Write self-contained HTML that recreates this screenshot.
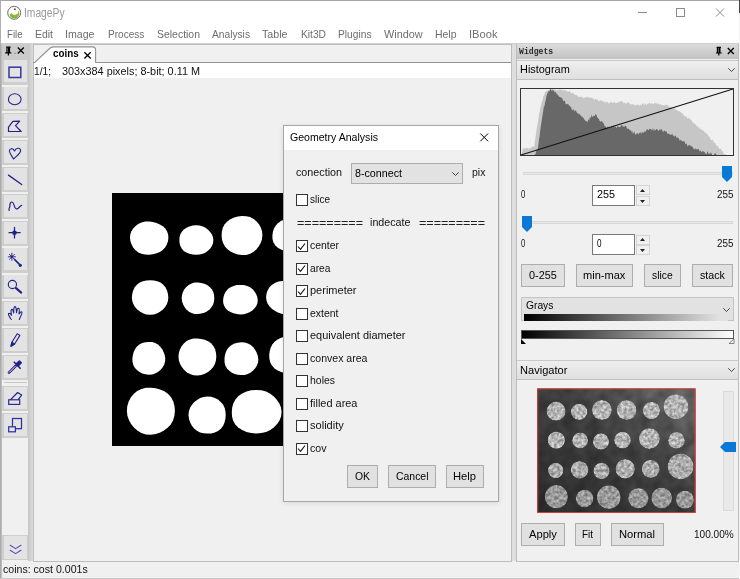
<!DOCTYPE html>
<html><head><meta charset="utf-8"><title>ImagePy</title>
<style>
html,body{margin:0;padding:0;}
body{width:740px;height:579px;position:relative;overflow:hidden;background:#fff;font-family:"Liberation Sans",sans-serif;font-size:11.5px;}
.t{position:absolute;white-space:nowrap;line-height:16px;transform-origin:0 0;}
.btn{position:absolute;box-sizing:border-box;border:1px solid #adadad;background:#e1e1e1;}
.tb{position:absolute;left:3.5px;width:23.5px;height:24px;background:#e4e4e4;}
.cb{position:absolute;box-sizing:border-box;width:12px;height:12px;border:1px solid #333;background:#fff;}
svg{position:absolute;overflow:visible;}
</style></head><body>

<div style="position:absolute;left:0px;top:0px;width:740px;height:1px;background:#a5a5a5;"></div>
<svg style="left:0px;top:0px" width="30" height="26" viewBox="0 0 30 26">
<circle cx="14.2" cy="12.8" r="6.5" fill="#fbfdf6" stroke="#6a6a6a" stroke-width="1"/>
<path d="M9.6 14.2A4.8 4.8 0 0 0 19.2 13.2A4.9 4.9 0 0 0 17.6 9.4A3.4 3.4 0 0 1 11.6 13.2Z" fill="#8ab83a"/>
<path d="M10.4 15.8A4.8 4.8 0 0 0 18.9 14.6A4.6 3.6 0 0 1 10.4 15.8Z" fill="#6f9f2a"/>
<circle cx="14.9" cy="9.2" r="1" fill="#555"/>
</svg>
<div class="t" style="left:23.50px;top:4.84px;font-size:12px;color:#999;transform:scaleX(0.8555);">ImagePy</div>
<svg style="left:0px;top:0px" width="740" height="26" viewBox="0 0 740 26">
<path d="M638 12.5h9" stroke="#8a8a8a" stroke-width="1" fill="none"/>
<rect x="676.5" y="8.5" width="8" height="8" stroke="#8a8a8a" stroke-width="1" fill="none"/>
<path d="M716 8.5l8 8M724 8.5l-8 8" stroke="#8a8a8a" stroke-width="1" fill="none"/>
</svg>
<div class="t" style="left:6.50px;top:25.52px;font-size:11.5px;color:#6d6d6d;transform:scaleX(0.8372);">File</div>
<div class="t" style="left:34.50px;top:25.52px;font-size:11.5px;color:#6d6d6d;transform:scaleX(0.9074);">Edit</div>
<div class="t" style="left:65.00px;top:25.52px;font-size:11.5px;color:#6d6d6d;transform:scaleX(0.9227);">Image</div>
<div class="t" style="left:107.50px;top:25.52px;font-size:11.5px;color:#6d6d6d;transform:scaleX(0.8732);">Process</div>
<div class="t" style="left:156.50px;top:25.52px;font-size:11.5px;color:#6d6d6d;transform:scaleX(0.9087);">Selection</div>
<div class="t" style="left:211.50px;top:25.52px;font-size:11.5px;color:#6d6d6d;transform:scaleX(0.8871);">Analysis</div>
<div class="t" style="left:262.00px;top:25.52px;font-size:11.5px;color:#6d6d6d;transform:scaleX(0.9278);">Table</div>
<div class="t" style="left:300.50px;top:25.52px;font-size:11.5px;color:#6d6d6d;transform:scaleX(0.8891);">Kit3D</div>
<div class="t" style="left:337.50px;top:25.52px;font-size:11.5px;color:#6d6d6d;transform:scaleX(0.8881);">Plugins</div>
<div class="t" style="left:383.75px;top:25.52px;font-size:11.5px;color:#6d6d6d;transform:scaleX(0.9465);">Window</div>
<div class="t" style="left:435.00px;top:25.52px;font-size:11.5px;color:#6d6d6d;transform:scaleX(0.9098);">Help</div>
<div class="t" style="left:469.00px;top:25.52px;font-size:11.5px;color:#6d6d6d;transform:scaleX(0.9681);">IBook</div>
<div style="position:absolute;left:0px;top:42.5px;width:740px;height:537px;background:#f0f0f0;"></div>
<div style="position:absolute;left:0px;top:42.5px;width:740px;height:1.5px;background:#d0d0d0;"></div>
<div style="position:absolute;left:0px;top:1px;width:1px;height:578px;background:#b0b0b0;"></div>
<div style="position:absolute;left:0px;top:43.5px;width:2px;height:535px;background:linear-gradient(to right,#a2a2a2,#c6c6c6);"></div>
<div style="position:absolute;left:2px;top:44px;width:26.2px;height:517px;background:#f0f0f0;"></div>
<div style="position:absolute;left:2px;top:44px;width:26.2px;height:15.7px;background:#cbcbcb;"></div>
<div style="position:absolute;left:28.2px;top:44px;width:4.5px;height:517px;background:linear-gradient(to right,#c6c6c6,#dcdcdc);"></div>
<svg style="left:0px;top:44px" width="30" height="16" viewBox="0 0 30 16">
<path d="M6.2 3.2h4.4M7 3.2v5.6M5.2 8.8h6.2M8.4 8.8v2.8" stroke="#000" stroke-width="1.2" fill="none"/>
<rect x="8" y="3.2" width="2.1" height="5.6" fill="#000"/>
<rect x="14.5" y="8.8" width="1" height="1" fill="#555"/>
<path d="M17.8 3.5l6 6M23.8 3.5l-6 6" stroke="#000" stroke-width="1.3" fill="none"/>
</svg>
<div style="position:absolute;left:2.1px;top:59.7px;width:25.9px;height:24.9px;background:#cecece;"></div>
<div style="position:absolute;left:4.1px;top:60.4px;width:22.5px;height:22.0px;background:#e3e3e3;"></div>
<div style="position:absolute;left:2.1px;top:86.55px;width:25.9px;height:24.9px;background:#cecece;"></div>
<div style="position:absolute;left:4.1px;top:87.25px;width:22.5px;height:22.0px;background:#e3e3e3;"></div>
<div style="position:absolute;left:2.1px;top:113.4px;width:25.9px;height:24.9px;background:#cecece;"></div>
<div style="position:absolute;left:4.1px;top:114.1px;width:22.5px;height:22.0px;background:#e3e3e3;"></div>
<div style="position:absolute;left:2.1px;top:140.25px;width:25.9px;height:24.9px;background:#cecece;"></div>
<div style="position:absolute;left:4.1px;top:140.95px;width:22.5px;height:22.0px;background:#e3e3e3;"></div>
<div style="position:absolute;left:2.1px;top:167.1px;width:25.9px;height:24.9px;background:#cecece;"></div>
<div style="position:absolute;left:4.1px;top:167.8px;width:22.5px;height:22.0px;background:#e3e3e3;"></div>
<div style="position:absolute;left:2.1px;top:193.95px;width:25.9px;height:24.9px;background:#cecece;"></div>
<div style="position:absolute;left:4.1px;top:194.65px;width:22.5px;height:22.0px;background:#e3e3e3;"></div>
<div style="position:absolute;left:2.1px;top:220.8px;width:25.9px;height:24.9px;background:#cecece;"></div>
<div style="position:absolute;left:4.1px;top:221.5px;width:22.5px;height:22.0px;background:#e3e3e3;"></div>
<div style="position:absolute;left:2.1px;top:247.65px;width:25.9px;height:24.9px;background:#cecece;"></div>
<div style="position:absolute;left:4.1px;top:248.35px;width:22.5px;height:22.0px;background:#e3e3e3;"></div>
<div style="position:absolute;left:2.1px;top:274.5px;width:25.9px;height:24.9px;background:#cecece;"></div>
<div style="position:absolute;left:4.1px;top:275.2px;width:22.5px;height:22.0px;background:#e3e3e3;"></div>
<div style="position:absolute;left:2.1px;top:301.35px;width:25.9px;height:24.9px;background:#cecece;"></div>
<div style="position:absolute;left:4.1px;top:302.05px;width:22.5px;height:22.0px;background:#e3e3e3;"></div>
<div style="position:absolute;left:2.1px;top:328.2px;width:25.9px;height:24.9px;background:#cecece;"></div>
<div style="position:absolute;left:4.1px;top:328.9px;width:22.5px;height:22.0px;background:#e3e3e3;"></div>
<div style="position:absolute;left:2.1px;top:355.05px;width:25.9px;height:24.9px;background:#cecece;"></div>
<div style="position:absolute;left:4.1px;top:355.75px;width:22.5px;height:22.0px;background:#e3e3e3;"></div>
<div style="position:absolute;left:2.1px;top:386.1px;width:25.9px;height:24.9px;background:#cecece;"></div>
<div style="position:absolute;left:4.1px;top:386.8px;width:22.5px;height:22.0px;background:#e3e3e3;"></div>
<div style="position:absolute;left:2.1px;top:412.95px;width:25.9px;height:24.9px;background:#cecece;"></div>
<div style="position:absolute;left:4.1px;top:413.65px;width:22.5px;height:22.0px;background:#e3e3e3;"></div>
<div style="position:absolute;left:3.5px;top:381.6px;width:23.5px;height:1px;background:#c8c8c8;"></div>
<div style="position:absolute;left:2.1px;top:534.8px;width:25.9px;height:25.6px;background:#cecece;"></div>
<div style="position:absolute;left:4.1px;top:535.5px;width:22.5px;height:23.2px;background:#e3e3e3;"></div>
<svg style="left:0;top:0" width="32" height="579" viewBox="0 0 32 579" fill="none" stroke="#22228a" stroke-width="1.1" stroke-linejoin="round" stroke-linecap="round"><rect x="9" y="67.2" width="11.8" height="10.3" stroke-width="1.5" stroke="#3636a0" stroke-linejoin="miter"/><ellipse cx="14.75" cy="99.3" rx="6.3" ry="5.5"/><path d="M8.5 127.1L12.9 121.4L19.7 121.2L15.5 125.6L21.2 131.5L8.5 131.5Z" stroke-width="1.2"/><path d="M13.6 159C12 156 9.6 153.5 9.4 151C9.3 148.5 12.6 147.3 14.6 151C15.8 147.8 19.8 147.3 20.6 150C21.2 153 16.5 156.2 13.6 159Z"/><path d="M8.5 175.1L21.7 184.5" stroke-width="1.3"/><path d="M9.2 210.4C8 208.5 10.2 207.6 9.9 206C9.6 203.8 10.8 201.9 12 202C13.8 202.2 13.9 205.6 14.8 207.2C15.8 209 17.2 209.4 18.3 208.2C19.5 207 20.4 205.9 21.7 205.3" stroke-width="1.2"/><path d="M14.5 227.3V237.9M9.1 232.7H20.2" stroke-width="1.3"/><circle cx="14.5" cy="232.7" r="2.3" fill="#22228a" stroke="none"/><path d="M11.9 253.2V260.4M8.3 256.8H15.5M9.4 254.3L14.4 259.3M14.4 254.3L9.4 259.3" stroke-width="0.9"/><circle cx="11.9" cy="256.8" r="1.3" fill="#22228a" stroke="none"/><path d="M14.5 259.4L20.5 265.4" stroke-width="1.5"/><circle cx="20.3" cy="265.3" r="1.6" fill="#22228a" stroke="none"/><circle cx="12.4" cy="284.5" r="4.1"/><path d="M16 288.1L21.2 292.6" stroke-width="2.1"/><path d="M11.3 319.5C10 317.5 8 315 8.5 313.6C9.2 312.6 10.6 313.8 11.5 315.2C11.3 313 10.3 310 11.6 309.4C12.8 309 13.3 311.3 13.7 313C13.7 310.8 13.4 307 14.9 306.6C16.3 306.4 16.3 310 16.5 312.6C17 310.6 17.2 308 18.6 308.3C19.9 308.8 19.2 311.8 19 314C19.7 312.8 20.8 311.4 21.8 312C22.8 313 20.3 316.5 19.3 319.5" stroke-width="1.1"/><path d="M11 346.2L11.9 342.2L17.2 333.8L19.9 335.4L14.6 344L11 346.2Z" stroke-width="1.1"/><path d="M11 346.2L11.9 342.2L14.6 344Z" fill="#22228a"/><path d="M9 372.6L15.6 366" stroke-width="2.6"/><path d="M9.3 372.3L15.3 366.3" stroke="#f4f4f4" stroke-width="0.9"/><path d="M14.3 362.2L20.2 368.2M16 364.2L19.4 361L21.2 362.8L18 366.2Z" fill="#22228a" stroke-width="1.6"/><rect x="8.7" y="399.8" width="11" height="4.6" stroke-width="1.2" stroke="#2a2a98" stroke-linejoin="miter"/><path d="M10.9 399.4L17.6 392.5L21.6 395.1L18.4 399.4" stroke-width="1.2"/><rect x="12.5" y="418.5" width="9" height="10.2" stroke-width="1.25" stroke="#3030a0" stroke-linejoin="miter"/><rect x="8.7" y="426.8" width="6.7" height="5" fill="#e4e4e4" stroke-width="1.25" stroke="#3030a0" stroke-linejoin="miter"/><path d="M10.2 545.3L15.6 548.6L21 545.3M10.2 550.3L15.6 553.6L21 550.3" stroke="#5050b4" stroke-width="1.1"/></svg>
<div style="position:absolute;left:32.5px;top:44px;width:479.5px;height:517.5px;background:#f0f0f0;border:1px solid #bdbdbd;box-sizing:border-box;"></div>
<svg style="left:33px;top:45px" width="480" height="19" viewBox="0 0 480 19">
<path d="M1.5 18L16 4Q18.2 1.9 20.5 1.9H59.5Q62.6 1.9 62.6 5V18Z" fill="#fff"/>
<path d="M0 17.6H1.5L16 4Q18.2 1.9 20.5 1.9H59.5Q62.6 1.9 62.6 5V17.6H478" fill="none" stroke="#939393" stroke-width="1.1"/>
<path d="M51.4 7.2l6.3 6.3M57.7 7.2l-6.3 6.3" stroke="#000" stroke-width="1.3" fill="none"/>
</svg>
<div class="t" style="left:53.10px;top:45.32px;font-size:11.5px;color:#000;transform:scaleX(0.8562);font-weight:bold;">coins</div>
<div style="position:absolute;left:33.5px;top:63px;width:477.5px;height:14.5px;background:#fff;"></div>
<div class="t" style="left:34.30px;top:62.52px;font-size:11.5px;color:#111;transform:scaleX(0.8852);">1/1;</div>
<div class="t" style="left:61.80px;top:62.52px;font-size:11.5px;color:#111;transform:scaleX(0.9441);">303x384 pixels; 8-bit; 0.11 M</div>
<div style="position:absolute;left:112px;top:193px;width:200px;height:252.8px;background:#000;"></div>
<svg style="left:0;top:0" width="740" height="579" viewBox="0 0 740 579"><polygon points="168.4,238.1 167.9,241.5 166.8,244.6 165.1,247.5 162.8,249.9 159.9,251.9 156.6,253.3 153.0,254.2 149.1,254.7 145.1,254.5 141.4,253.7 138.1,252.2 135.3,250.0 133.2,247.4 131.6,244.5 130.5,241.5 130.0,238.1 130.2,234.7 131.3,231.5 133.0,228.7 135.4,226.2 138.2,224.1 141.5,222.6 145.1,221.6 149.1,221.5 153.0,222.0 156.5,223.0 159.8,224.4 162.8,226.3 165.3,228.6 167.1,231.5 168.2,234.7" fill="#fff"/><polygon points="213.4,240.1 213.0,243.2 211.9,246.0 210.3,248.4 208.2,250.6 205.7,252.4 202.8,253.8 199.6,254.6 196.1,254.8 192.6,254.5 189.4,253.8 186.4,252.6 183.7,250.9 181.7,248.6 180.3,246.0 179.6,243.1 179.4,240.1 179.6,237.1 180.4,234.3 181.8,231.7 183.9,229.5 186.5,227.7 189.4,226.4 192.6,225.5 196.1,225.2 199.6,225.5 202.8,226.4 205.6,227.8 208.0,229.7 210.1,231.9 211.8,234.3 212.9,237.0" fill="#fff"/><polygon points="262.4,235.4 261.9,239.4 260.7,243.0 258.8,246.3 256.5,249.2 253.6,251.8 250.2,253.8 246.2,254.9 242.0,255.0 237.8,254.5 234.1,253.3 230.6,251.5 227.5,249.3 225.0,246.4 223.1,243.1 222.0,239.4 221.6,235.4 221.9,231.4 222.9,227.6 224.7,224.2 227.3,221.4 230.5,219.2 234.1,217.6 237.9,216.6 242.0,216.0 246.2,216.2 250.1,217.1 253.7,218.9 256.6,221.4 259.1,224.4 260.9,227.7 262.1,231.4" fill="#fff"/><polygon points="313.0,235.4 312.7,238.9 311.5,242.2 309.5,245.0 306.9,247.5 303.9,249.5 300.5,251.1 296.7,252.1 292.5,252.3 288.4,252.0 284.6,251.0 281.0,249.6 277.8,247.7 275.2,245.2 273.4,242.2 272.5,238.9 272.4,235.4 272.9,232.0 273.9,228.8 275.6,225.8 277.9,223.2 280.9,221.1 284.5,219.6 288.3,218.7 292.5,218.3 296.7,218.6 300.6,219.5 304.0,221.2 306.9,223.4 309.2,225.9 311.0,228.8 312.4,231.9" fill="#fff"/><polygon points="168.3,297.2 168.0,300.7 166.9,304.0 165.2,306.9 162.9,309.4 160.3,311.5 157.3,313.3 153.9,314.4 150.1,314.8 146.3,314.4 142.9,313.2 139.9,311.5 137.3,309.4 135.0,306.9 133.3,304.0 132.2,300.7 131.9,297.2 132.3,293.7 133.2,290.4 134.7,287.3 136.9,284.7 139.7,282.6 142.9,281.2 146.4,280.5 150.1,280.2 153.8,280.4 157.3,281.2 160.5,282.6 163.3,284.7 165.4,287.3 167.0,290.4 167.9,293.7" fill="#fff"/><polygon points="214.3,298.2 214.0,301.4 213.1,304.4 211.6,307.1 209.6,309.5 207.1,311.3 204.3,312.7 201.3,313.6 198.0,314.1 194.6,313.9 191.5,313.1 188.7,311.6 186.4,309.5 184.5,307.0 183.1,304.3 182.1,301.4 181.7,298.2 182.0,295.0 182.9,292.0 184.4,289.3 186.3,286.9 188.7,284.9 191.5,283.4 194.6,282.6 198.0,282.5 201.3,282.9 204.3,283.8 207.1,285.1 209.7,286.9 211.8,289.2 213.3,291.9 214.1,294.9" fill="#fff"/><polygon points="257.7,299.7 257.5,302.8 256.5,305.6 254.8,308.1 252.6,310.2 250.0,312.0 247.1,313.3 243.8,314.2 240.3,314.5 236.8,314.1 233.5,313.3 230.5,312.1 227.8,310.4 225.6,308.2 224.0,305.6 223.2,302.7 223.1,299.7 223.6,296.7 224.5,294.0 225.9,291.4 227.9,289.1 230.5,287.2 233.5,285.9 236.7,285.1 240.3,284.9 243.9,285.1 247.2,285.9 250.1,287.3 252.6,289.2 254.5,291.5 256.1,294.0 257.2,296.7" fill="#fff"/><polygon points="306.9,297.2 306.5,300.6 305.4,303.8 303.4,306.6 300.9,309.1 297.9,311.1 294.5,312.7 290.7,313.9 286.5,314.3 282.3,313.9 278.4,312.8 275.1,311.1 272.1,309.0 269.6,306.6 267.7,303.8 266.5,300.6 266.1,297.2 266.5,293.8 267.6,290.6 269.3,287.6 271.7,285.1 274.8,283.0 278.5,281.6 282.4,280.9 286.5,280.7 290.6,281.0 294.5,281.7 298.1,283.0 301.3,285.0 303.7,287.6 305.4,290.6 306.5,293.8" fill="#fff"/><polygon points="165.2,358.3 165.0,361.7 164.1,364.9 162.5,367.6 160.4,370.0 157.9,371.9 155.1,373.4 152.1,374.4 148.7,374.7 145.4,374.3 142.3,373.4 139.5,372.0 136.9,370.1 134.8,367.7 133.3,364.9 132.5,361.7 132.4,358.3 132.9,355.0 133.7,351.9 135.1,349.1 137.0,346.6 139.4,344.5 142.2,343.0 145.3,342.2 148.7,341.9 152.1,342.1 155.2,343.0 158.0,344.5 160.3,346.7 162.2,349.2 163.6,351.9 164.7,355.0" fill="#fff"/><polygon points="216.3,356.7 215.9,360.5 214.9,364.0 213.2,367.1 210.8,369.8 208.0,372.0 204.8,373.7 201.3,374.9 197.4,375.4 193.5,375.2 189.9,374.1 186.7,372.2 184.0,369.8 181.8,367.0 180.1,363.9 178.9,360.5 178.5,356.7 178.8,352.9 179.9,349.4 181.6,346.2 183.8,343.4 186.6,341.1 189.9,339.4 193.5,338.6 197.4,338.4 201.2,338.9 204.7,339.8 208.1,341.2 211.0,343.3 213.4,346.1 215.1,349.3 216.0,352.9" fill="#fff"/><polygon points="258.3,358.8 258.1,362.2 257.0,365.3 255.4,368.1 253.2,370.5 250.7,372.4 247.8,373.9 244.7,374.9 241.2,375.1 237.8,374.8 234.6,373.9 231.6,372.5 229.0,370.6 226.8,368.2 225.3,365.4 224.6,362.2 224.5,358.8 224.9,355.5 225.7,352.4 227.1,349.6 229.1,347.0 231.6,345.0 234.5,343.6 237.7,342.7 241.2,342.3 244.7,342.6 247.9,343.5 250.8,345.1 253.2,347.2 255.1,349.7 256.6,352.4 257.7,355.4" fill="#fff"/><polygon points="309.2,355.0 308.9,358.9 307.7,362.4 305.7,365.5 303.2,368.1 300.2,370.4 296.9,372.1 293.1,373.1 289.0,373.4 284.9,373.0 281.2,372.0 277.7,370.5 274.5,368.4 272.0,365.6 270.3,362.4 269.4,358.8 269.2,355.0 269.7,351.3 270.7,347.8 272.3,344.6 274.6,341.7 277.6,339.4 281.1,337.8 284.9,336.8 289.0,336.4 293.1,336.7 296.9,337.8 300.3,339.6 303.1,341.9 305.4,344.7 307.3,347.8 308.6,351.2" fill="#fff"/><polygon points="174.9,410.9 174.4,415.7 173.1,420.2 170.9,424.2 167.9,427.6 164.3,430.3 160.3,432.4 155.8,433.9 150.9,434.7 145.9,434.4 141.3,433.0 137.3,430.6 133.9,427.5 131.1,424.0 128.9,420.1 127.4,415.7 126.9,410.9 127.3,406.1 128.7,401.6 130.8,397.6 133.6,394.0 137.2,391.0 141.4,388.9 146.0,387.8 150.9,387.7 155.7,388.2 160.2,389.4 164.4,391.3 168.2,394.0 171.2,397.4 173.3,401.6 174.5,406.1" fill="#fff"/><polygon points="225.7,415.2 225.4,419.0 224.5,422.5 223.1,425.8 220.9,428.7 218.1,431.0 214.8,432.5 211.2,433.4 207.4,433.6 203.6,433.3 200.1,432.4 196.9,430.7 194.1,428.5 191.9,425.7 190.2,422.5 189.0,419.0 188.5,415.2 188.9,411.3 190.1,407.8 192.0,404.8 194.3,402.1 197.1,399.9 200.1,398.1 203.6,396.9 207.4,396.4 211.2,396.8 214.8,397.9 217.9,399.6 220.7,401.9 223.0,404.6 224.7,407.9 225.5,411.4" fill="#fff"/><polygon points="281.6,411.8 281.1,416.3 279.5,420.4 277.1,424.1 274.0,427.3 270.3,429.9 266.1,431.9 261.4,433.1 256.3,433.5 251.2,433.0 246.5,431.9 242.1,430.1 238.2,427.6 235.1,424.3 233.1,420.5 232.0,416.2 231.8,411.8 232.2,407.4 233.4,403.3 235.4,399.5 238.4,396.1 242.2,393.5 246.5,391.6 251.2,390.3 256.3,389.9 261.4,390.2 266.1,391.5 270.3,393.7 273.8,396.5 276.8,399.7 279.2,403.3 280.9,407.3" fill="#fff"/></svg>
<div style="position:absolute;left:283px;top:124.5px;width:215.5px;height:377px;background:#f0f0f0;border:1px solid #a6a6a6;box-sizing:border-box;box-shadow:0 1px 5px rgba(0,0,0,0.10);"></div>
<div style="position:absolute;left:284px;top:125.5px;width:213.5px;height:24.6px;background:#fff;"></div>
<div class="t" style="left:290.00px;top:129.02px;font-size:11.5px;color:#000;transform:scaleX(0.9181);">Geometry Analysis</div>
<svg style="left:480px;top:133px" width="9" height="9" viewBox="0 0 9 9"><path d="M0.3 0.5l7.8 7.8M8.1 0.5l-7.8 7.8" stroke="#000" stroke-width="1" fill="none"/></svg>
<div class="t" style="left:296.00px;top:164.02px;font-size:11.5px;color:#111;transform:scaleX(0.9346);">conection</div>
<div style="position:absolute;left:351px;top:163px;width:112px;height:20.5px;background:#e2e2e2;border:1px solid #adadad;box-sizing:border-box;"></div>
<div class="t" style="left:354.50px;top:165.02px;font-size:11.5px;color:#000;transform:scaleX(0.9310);">8-connect</div>
<svg style="left:452px;top:172px" width="7" height="4" viewBox="0 0 7 4"><path d="M0.3 0.3l3.2 3.2l3.2-3.2" stroke="#444" stroke-width="1" fill="none"/></svg>
<div class="t" style="left:471.80px;top:164.02px;font-size:11.5px;color:#111;transform:scaleX(0.9103);">pix</div>
<div class="cb" style="left:295.5px;top:193.7px"></div>
<div class="t" style="left:309.50px;top:190.52px;font-size:11.5px;color:#111;transform:scaleX(0.8696);">slice</div>
<div class="cb" style="left:295.5px;top:240.2px"><svg style="left:0.5px;top:0.5px" width="9" height="9" viewBox="0 0 9 9"><path d="M1 4.5l2.5 2.8L8 1.5" stroke="#111" stroke-width="1.1" fill="none"/></svg></div>
<div class="t" style="left:309.50px;top:237.02px;font-size:11.5px;color:#111;transform:scaleX(0.9071);">center</div>
<div class="cb" style="left:295.5px;top:262.7px"><svg style="left:0.5px;top:0.5px" width="9" height="9" viewBox="0 0 9 9"><path d="M1 4.5l2.5 2.8L8 1.5" stroke="#111" stroke-width="1.1" fill="none"/></svg></div>
<div class="t" style="left:309.50px;top:259.52px;font-size:11.5px;color:#111;transform:scaleX(0.8891);">area</div>
<div class="cb" style="left:295.5px;top:285.2px"><svg style="left:0.5px;top:0.5px" width="9" height="9" viewBox="0 0 9 9"><path d="M1 4.5l2.5 2.8L8 1.5" stroke="#111" stroke-width="1.1" fill="none"/></svg></div>
<div class="t" style="left:309.50px;top:282.02px;font-size:11.5px;color:#111;transform:scaleX(0.9570);">perimeter</div>
<div class="cb" style="left:295.5px;top:307.7px"></div>
<div class="t" style="left:309.50px;top:304.52px;font-size:11.5px;color:#111;transform:scaleX(0.9095);">extent</div>
<div class="cb" style="left:295.5px;top:330.2px"></div>
<div class="t" style="left:309.50px;top:327.02px;font-size:11.5px;color:#111;transform:scaleX(0.9512);">equivalent diameter</div>
<div class="cb" style="left:295.5px;top:352.7px"></div>
<div class="t" style="left:309.50px;top:349.52px;font-size:11.5px;color:#111;transform:scaleX(0.9174);">convex area</div>
<div class="cb" style="left:295.5px;top:375.2px"></div>
<div class="t" style="left:309.50px;top:372.02px;font-size:11.5px;color:#111;transform:scaleX(0.9096);">holes</div>
<div class="cb" style="left:295.5px;top:397.7px"></div>
<div class="t" style="left:309.50px;top:394.52px;font-size:11.5px;color:#111;transform:scaleX(0.9517);">filled area</div>
<div class="cb" style="left:295.5px;top:420.2px"></div>
<div class="t" style="left:309.50px;top:417.02px;font-size:11.5px;color:#111;transform:scaleX(0.9621);">solidity</div>
<div class="cb" style="left:295.5px;top:442.7px"><svg style="left:0.5px;top:0.5px" width="9" height="9" viewBox="0 0 9 9"><path d="M1 4.5l2.5 2.8L8 1.5" stroke="#111" stroke-width="1.1" fill="none"/></svg></div>
<div class="t" style="left:309.50px;top:439.52px;font-size:11.5px;color:#111;transform:scaleX(0.9227);">cov</div>
<div class="t" style="left:296.50px;top:214.52px;font-size:11.5px;color:#222;transform:scaleX(1.0921);">=========</div>
<div class="t" style="left:370.00px;top:213.52px;font-size:11.5px;color:#111;transform:scaleX(0.9317);">indecate</div>
<div class="t" style="left:418.50px;top:214.52px;font-size:11.5px;color:#222;transform:scaleX(1.0921);">=========</div>
<div class="btn" style="left:347px;top:464.5px;width:31.399999999999977px;height:23px;"></div>
<div class="t" style="left:355.00px;top:467.62px;font-size:11.5px;color:#000;transform:scaleX(0.9027);">OK</div>
<div class="btn" style="left:388px;top:464.5px;width:48px;height:23px;"></div>
<div class="t" style="left:395.50px;top:467.62px;font-size:11.5px;color:#000;transform:scaleX(0.9073);">Cancel</div>
<div class="btn" style="left:446px;top:464.5px;width:38.39999999999998px;height:23px;"></div>
<div class="t" style="left:453.30px;top:467.62px;font-size:11.5px;color:#000;transform:scaleX(0.9732);">Help</div>
<div style="position:absolute;left:512px;top:44px;width:3.5px;height:517px;background:#dedede;"></div>
<div style="position:absolute;left:515.5px;top:43.5px;width:223px;height:518px;background:#f0f0f0;border:1px solid #bdbdbd;box-sizing:border-box;"></div>
<div style="position:absolute;left:516.5px;top:44px;width:221.5px;height:15px;background:linear-gradient(#dcdcdc,#c2c2c2);"></div>
<div class="t" style="left:519.00px;top:43.80px;font-size:9px;color:#2a2a2a;transform:scaleX(0.9048);font-family:'Liberation Mono',monospace;font-weight:bold;">Widgets</div>
<svg style="left:713px;top:44px" width="24" height="16" viewBox="0 0 24 16">
<path d="M3.6 3.4h4.4M4.4 3.4v5.6M2.9 9h5.8M5.8 9v2.6" stroke="#000" stroke-width="1.2" fill="none"/>
<rect x="5.4" y="3.4" width="2.1" height="5.6" fill="#000"/>
<path d="M14.8 4l6 6M20.8 4l-6 6" stroke="#000" stroke-width="1.3" fill="none"/>
</svg>
<div style="position:absolute;left:516.5px;top:59.7px;width:221.5px;height:20px;background:linear-gradient(#efefef,#dfdfdf);border-top:1px solid #c8c8c8;border-bottom:1px solid #c0c0c0;box-sizing:border-box;"></div>
<div class="t" style="left:520.10px;top:61.42px;font-size:11.5px;color:#000;transform:scaleX(0.9488);">Histogram</div>
<svg style="left:727.5px;top:67.9px" width="7" height="4" viewBox="0 0 7 4"><path d="M0.3 0.3l3.2 3.2l3.2-3.2" stroke="#444" stroke-width="1" fill="none"/></svg>
<svg style="left:0;top:0" width="740" height="579" viewBox="0 0 740 579"><rect x="520.5" y="88.5" width="213" height="67" fill="#f0f0f0" stroke="#333" stroke-width="1"/><path d="M521.4 155.5L521.4 154.4L522.1 151.7L522.7 148.9L523.3 148.2L523.9 148.0L524.5 149.3L525.1 147.4L525.7 149.2L526.3 148.1L526.9 147.9L527.5 148.0L528.1 148.5L528.7 149.3L529.3 147.8L529.9 148.4L530.5 148.3L531.1 147.6L531.7 147.7L532.3 146.5L532.9 146.3L533.6 146.4L534.2 147.2L534.8 142.3L535.4 137.8L536.0 134.0L536.6 129.5L537.2 125.2L537.8 122.7L538.4 119.0L539.0 114.5L539.6 111.7L540.2 108.0L540.8 106.1L541.4 103.8L542.0 101.0L542.6 100.6L543.2 96.8L543.8 95.6L544.5 94.4L545.1 91.9L545.7 92.0L546.3 90.5L546.9 91.3L547.5 91.0L548.1 90.0L548.7 90.4L549.3 89.2L549.9 90.0L550.5 89.8L551.1 89.7L551.7 89.5L552.3 90.3L552.9 90.5L553.5 89.5L554.1 89.9L554.7 88.6L555.3 90.0L556.0 89.9L556.6 90.7L557.2 90.5L557.8 89.4L558.4 89.7L559.0 90.3L559.6 89.0L560.2 90.0L560.8 89.5L561.4 89.4L562.0 89.4L562.6 90.9L563.2 89.7L563.8 90.0L564.4 90.3L565.0 91.4L565.6 89.8L566.2 90.7L566.8 90.9L567.5 91.7L568.1 91.7L568.7 91.8L569.3 90.8L569.9 91.5L570.5 91.7L571.1 93.2L571.7 93.8L572.3 92.5L572.9 92.9L573.5 93.4L574.1 93.8L574.7 94.7L575.3 95.3L575.9 95.0L576.5 94.9L577.1 95.9L577.7 95.9L578.3 96.4L579.0 97.3L579.6 96.9L580.2 96.6L580.8 96.9L581.4 97.2L582.0 96.0L582.6 97.9L583.2 97.7L583.8 98.0L584.4 98.0L585.0 97.2L585.6 97.3L586.2 96.8L586.8 98.1L587.4 97.0L588.0 97.1L588.6 97.5L589.2 97.5L589.8 98.0L590.5 97.5L591.1 97.5L591.7 97.9L592.3 98.0L592.9 98.7L593.5 98.1L594.1 100.1L594.7 99.7L595.3 98.8L595.9 99.2L596.5 99.6L597.1 99.8L597.7 99.4L598.3 101.1L598.9 101.6L599.5 100.6L600.1 100.8L600.7 100.1L601.4 100.3L602.0 101.0L602.6 101.0L603.2 102.3L603.8 101.1L604.4 100.9L605.0 103.1L605.6 102.3L606.2 101.7L606.8 102.7L607.4 101.6L608.0 102.6L608.6 103.5L609.2 103.3L609.8 102.9L610.4 101.9L611.0 102.1L611.6 101.7L612.2 102.9L612.9 102.4L613.5 102.9L614.1 101.9L614.7 101.7L615.3 102.9L615.9 103.2L616.5 102.9L617.1 102.8L617.7 102.8L618.3 102.6L618.9 101.5L619.5 102.1L620.1 101.7L620.7 101.0L621.3 101.0L621.9 101.5L622.5 101.6L623.1 102.6L623.7 103.3L624.4 102.3L625.0 103.5L625.6 103.7L626.2 103.8L626.8 102.7L627.4 102.5L628.0 102.6L628.6 102.7L629.2 102.8L629.8 103.8L630.4 104.5L631.0 104.5L631.6 103.9L632.2 104.4L632.8 104.8L633.4 103.4L634.0 104.7L634.6 105.4L635.2 105.2L635.9 105.3L636.5 104.8L637.1 104.3L637.7 105.5L638.3 104.5L638.9 105.4L639.5 105.7L640.1 104.4L640.7 104.4L641.3 105.4L641.9 104.9L642.5 103.6L643.1 103.5L643.7 103.5L644.3 105.0L644.9 104.7L645.5 103.2L646.1 104.6L646.8 104.9L647.4 104.1L648.0 103.4L648.6 103.7L649.2 102.8L649.8 102.4L650.4 104.4L651.0 103.6L651.6 103.3L652.2 104.1L652.8 103.1L653.4 104.2L654.0 104.2L654.6 103.0L655.2 103.1L655.8 103.3L656.4 103.3L657.0 104.1L657.6 103.5L658.3 104.0L658.9 103.5L659.5 105.2L660.1 104.1L660.7 104.5L661.3 104.8L661.9 105.6L662.5 104.7L663.1 105.8L663.7 105.0L664.3 105.2L664.9 105.3L665.5 104.3L666.1 105.3L666.7 104.8L667.3 104.6L667.9 106.5L668.5 105.5L669.1 106.4L669.8 107.2L670.4 107.1L671.0 106.9L671.6 107.6L672.2 107.9L672.8 108.7L673.4 107.5L674.0 108.7L674.6 108.3L675.2 108.7L675.8 110.0L676.4 109.7L677.0 110.1L677.6 110.8L678.2 111.4L678.8 110.7L679.4 111.3L680.0 111.6L680.6 112.0L681.3 112.9L681.9 112.9L682.5 113.5L683.1 113.9L683.7 115.4L684.3 115.4L684.9 116.2L685.5 116.8L686.1 115.9L686.7 117.0L687.3 118.3L687.9 118.6L688.5 117.6L689.1 118.0L689.7 119.2L690.3 119.0L690.9 119.9L691.5 120.0L692.2 121.8L692.8 122.6L693.4 123.4L694.0 122.3L694.6 124.0L695.2 124.4L695.8 123.9L696.4 126.0L697.0 126.7L697.6 125.6L698.2 127.7L698.8 127.0L699.4 127.7L700.0 129.3L700.6 129.5L701.2 128.6L701.8 129.7L702.4 130.4L703.0 130.6L703.7 130.8L704.3 131.6L704.9 133.0L705.5 132.0L706.1 133.6L706.7 133.9L707.3 133.7L707.9 135.1L708.5 136.4L709.1 136.8L709.7 136.6L710.3 139.2L710.9 139.5L711.5 140.5L712.1 139.4L712.7 140.4L713.3 140.6L713.9 142.9L714.5 142.5L715.2 142.9L715.8 144.2L716.4 145.9L717.0 146.3L717.6 145.8L718.2 146.2L718.8 148.5L719.4 148.4L720.0 149.3L720.6 148.6L721.2 149.2L721.8 151.2L722.4 151.3L723.0 151.2L723.6 153.7L724.2 153.7L724.8 154.7L725.4 153.5L726.0 154.9L726.0 155.5Z" fill="#c6c6c6" stroke="none"/><path d="M534.8 155.5L534.8 153.6L535.4 154.6L536.0 151.9L536.6 150.2L537.2 149.4L537.8 149.1L538.4 144.2L539.0 139.4L539.6 136.2L540.2 131.0L540.8 126.2L541.4 122.4L542.0 118.2L542.6 114.7L543.2 111.1L543.8 107.1L544.5 106.0L545.1 102.1L545.7 100.3L546.3 96.8L546.9 94.9L547.5 92.8L548.1 92.4L548.7 90.5L549.3 91.6L549.9 90.0L550.5 88.4L551.1 89.5L551.7 91.1L552.3 88.8L552.9 91.1L553.5 90.2L554.1 90.8L554.7 92.4L555.3 91.7L556.0 92.6L556.6 93.8L557.2 95.3L557.8 93.9L558.4 96.1L559.0 96.4L559.6 96.9L560.2 97.0L560.8 97.5L561.4 97.4L562.0 98.3L562.6 98.9L563.2 101.4L563.8 100.5L564.4 100.7L565.0 101.0L565.6 103.8L566.2 104.4L566.8 104.3L567.5 103.7L568.1 104.1L568.7 104.9L569.3 105.9L569.9 105.6L570.5 107.0L571.1 107.0L571.7 109.6L572.3 110.2L572.9 109.4L573.5 109.0L574.1 111.7L574.7 110.2L575.3 110.8L575.9 110.3L576.5 111.9L577.1 112.8L577.7 113.5L578.3 113.2L579.0 114.7L579.6 113.8L580.2 115.2L580.8 115.3L581.4 116.8L582.0 116.3L582.6 116.9L583.2 118.1L583.8 118.3L584.4 119.7L585.0 119.9L585.6 121.0L586.2 121.1L586.8 121.6L587.4 122.5L588.0 120.2L588.6 119.3L589.2 120.5L589.8 117.2L590.5 118.1L591.1 117.1L591.7 114.5L592.3 116.8L592.9 116.8L593.5 115.8L594.1 116.0L594.7 116.0L595.3 113.8L595.9 114.8L596.5 115.1L597.1 117.0L597.7 117.8L598.3 118.8L598.9 118.9L599.5 120.8L600.1 121.0L600.7 121.9L601.4 121.1L602.0 121.1L602.6 122.1L603.2 123.3L603.8 123.2L604.4 126.0L605.0 125.8L605.6 126.6L606.2 127.2L606.8 127.9L607.4 127.3L608.0 125.8L608.6 128.2L609.2 128.0L609.8 127.2L610.4 127.2L611.0 127.5L611.6 125.7L612.2 127.7L612.9 126.2L613.5 125.6L614.1 126.1L614.7 127.5L615.3 125.8L615.9 127.4L616.5 128.1L617.1 126.6L617.7 126.2L618.3 126.4L618.9 127.0L619.5 127.2L620.1 126.7L620.7 126.7L621.3 125.0L621.9 125.1L622.5 125.6L623.1 127.2L623.7 126.1L624.4 127.0L625.0 125.5L625.6 125.8L626.2 126.6L626.8 128.2L627.4 128.7L628.0 129.1L628.6 128.5L629.2 129.6L629.8 130.0L630.4 130.4L631.0 129.9L631.6 132.5L632.2 130.7L632.8 133.4L633.4 133.6L634.0 131.1L634.6 132.7L635.2 134.1L635.9 134.9L636.5 133.6L637.1 133.4L637.7 133.0L638.3 135.0L638.9 132.5L639.5 133.5L640.1 131.9L640.7 132.9L641.3 133.9L641.9 131.3L642.5 133.1L643.1 132.0L643.7 132.9L644.3 132.1L644.9 130.5L645.5 132.3L646.1 130.8L646.8 129.2L647.4 129.0L648.0 130.2L648.6 129.9L649.2 129.2L649.8 128.7L650.4 129.2L651.0 129.1L651.6 130.6L652.2 128.0L652.8 130.2L653.4 130.4L654.0 128.2L654.6 130.6L655.2 129.9L655.8 130.6L656.4 128.8L657.0 129.2L657.6 129.4L658.3 131.3L658.9 130.2L659.5 129.6L660.1 130.0L660.7 129.6L661.3 129.1L661.9 129.4L662.5 131.8L663.1 130.3L663.7 132.5L664.3 130.6L664.9 130.8L665.5 131.7L666.1 130.9L666.7 131.7L667.3 133.6L667.9 133.7L668.5 133.8L669.1 133.5L669.8 134.7L670.4 135.1L671.0 134.2L671.6 135.0L672.2 133.3L672.8 135.7L673.4 135.1L674.0 136.4L674.6 136.5L675.2 135.8L675.8 135.5L676.4 138.6L677.0 136.6L677.6 138.0L678.2 138.0L678.8 138.3L679.4 140.0L680.0 141.1L680.6 139.4L681.3 141.0L681.9 140.3L682.5 141.5L683.1 141.4L683.7 141.1L684.3 141.5L684.9 142.1L685.5 144.6L686.1 143.7L686.7 143.3L687.3 145.8L687.9 146.5L688.5 145.2L689.1 144.7L689.7 145.2L690.3 145.3L690.9 146.5L691.5 146.1L692.2 146.8L692.8 147.1L693.4 148.3L694.0 149.5L694.6 149.3L695.2 148.6L695.8 148.8L696.4 149.4L697.0 149.2L697.6 149.3L698.2 148.7L698.8 149.6L699.4 151.9L700.0 149.6L700.6 151.0L701.2 151.6L701.8 152.6L702.4 150.9L703.0 151.3L703.7 151.5L704.3 152.0L704.9 152.3L705.5 154.0L706.1 153.8L706.7 154.0L707.3 151.5L707.9 151.6L708.5 153.8L709.1 154.5L709.7 153.3L710.3 153.8L710.9 152.2L711.5 153.5L712.1 154.9L712.7 154.9L713.3 154.9L713.9 154.9L714.5 153.6L715.2 153.3L715.8 153.6L716.4 154.8L717.0 154.9L717.0 155.5Z" fill="#686868" stroke="none"/><path d="M521 155L733 89" stroke="#111" stroke-width="1.05" fill="none"/><rect x="520.5" y="88.5" width="213" height="67" fill="none" stroke="#333" stroke-width="1"/></svg>
<div style="position:absolute;left:522.5px;top:171.5px;width:210px;height:3px;background:#e7e7e7;border:1px solid #d9d9d9;box-sizing:border-box;"></div>
<svg style="left:722.2px;top:166.2px" width="10" height="16" viewBox="0 0 10 16"><path d="M0 0H10V11L5 16L0 11Z" fill="#0a78d7"/></svg>
<div style="position:absolute;left:522.5px;top:220.5px;width:210px;height:3px;background:#e7e7e7;border:1px solid #d9d9d9;box-sizing:border-box;"></div>
<svg style="left:522.3px;top:215.6px" width="10" height="16" viewBox="0 0 10 16"><path d="M0 0H10V11L5 16L0 11Z" fill="#0a78d7"/></svg>
<div class="t" style="left:521.20px;top:186.02px;font-size:11.5px;color:#111;transform:scaleX(0.6737);">0</div>
<div class="t" style="left:717.30px;top:186.02px;font-size:11.5px;color:#111;transform:scaleX(0.8592);">255</div>
<div style="position:absolute;left:592px;top:184.5px;width:42.5px;height:21px;background:#fff;border:1px solid #7a7a7a;box-sizing:border-box;"></div>
<div class="t" style="left:597.00px;top:186.02px;font-size:11.5px;color:#000;transform:scaleX(0.9373);">255</div>
<div style="position:absolute;left:635.6px;top:185.0px;width:14px;height:10px;background:#f0f0f0;border:1px solid #d4d4d4;box-sizing:border-box;"></div>
<div style="position:absolute;left:635.6px;top:195.5px;width:14px;height:10px;background:#f0f0f0;border:1px solid #d4d4d4;box-sizing:border-box;"></div>
<svg style="left:640.3px;top:188.5px" width="5" height="14" viewBox="0 0 5 14"><path d="M0 3L2.5 0L5 3Z M0 11L2.5 14L5 11Z" fill="#222"/></svg>
<div class="t" style="left:521.20px;top:235.02px;font-size:11.5px;color:#111;transform:scaleX(0.6737);">0</div>
<div class="t" style="left:717.30px;top:235.02px;font-size:11.5px;color:#111;transform:scaleX(0.8592);">255</div>
<div style="position:absolute;left:592px;top:234px;width:42.5px;height:21px;background:#fff;border:1px solid #7a7a7a;box-sizing:border-box;"></div>
<div class="t" style="left:597.00px;top:235.02px;font-size:11.5px;color:#000;transform:scaleX(0.7051);">0</div>
<div style="position:absolute;left:635.6px;top:234.5px;width:14px;height:10px;background:#f0f0f0;border:1px solid #d4d4d4;box-sizing:border-box;"></div>
<div style="position:absolute;left:635.6px;top:245px;width:14px;height:10px;background:#f0f0f0;border:1px solid #d4d4d4;box-sizing:border-box;"></div>
<svg style="left:640.3px;top:238px" width="5" height="14" viewBox="0 0 5 14"><path d="M0 3L2.5 0L5 3Z M0 11L2.5 14L5 11Z" fill="#222"/></svg>
<div class="btn" style="left:521.2px;top:264.3px;width:43.5px;height:23px;"></div>
<div class="t" style="left:528.70px;top:267.02px;font-size:11.5px;color:#000;transform:scaleX(0.9477);">0-255</div>
<div class="btn" style="left:575.6px;top:264.3px;width:57.19999999999993px;height:23px;"></div>
<div class="t" style="left:583.00px;top:267.02px;font-size:11.5px;color:#000;transform:scaleX(0.9591);">min-max</div>
<div class="btn" style="left:644px;top:264.3px;width:36.700000000000045px;height:23px;"></div>
<div class="t" style="left:651.70px;top:267.02px;font-size:11.5px;color:#000;transform:scaleX(0.8957);">slice</div>
<div class="btn" style="left:691.5px;top:264.3px;width:41.700000000000045px;height:23px;"></div>
<div class="t" style="left:700.20px;top:267.02px;font-size:11.5px;color:#000;transform:scaleX(0.9253);">stack</div>
<div style="position:absolute;left:520.6px;top:296.7px;width:213.2px;height:24.5px;background:#e2e2e2;border:1px solid #c4c4c4;box-sizing:border-box;"></div>
<div class="t" style="left:526.20px;top:296.52px;font-size:11.5px;color:#000;transform:scaleX(0.8908);">Grays</div>
<div style="position:absolute;left:523.7px;top:314px;width:204px;height:6.5px;background:linear-gradient(to right,#000,#e2e2e2 96%);"></div>
<svg style="left:723.2px;top:308px" width="7" height="4" viewBox="0 0 7 4"><path d="M0.3 0.3l3.2 3.2l3.2-3.2" stroke="#444" stroke-width="1" fill="none"/></svg>
<div style="position:absolute;left:520.6px;top:329.6px;width:213.2px;height:9px;background:linear-gradient(to right,#000,#fff);border:1px solid #555;box-sizing:border-box;"></div>
<svg style="left:520.6px;top:338.5px" width="213" height="5" viewBox="0 0 213 5"><path d="M0 0V5H5Z" fill="#000"/><path d="M213 0V4.5H208Z" fill="#fff" stroke="#555" stroke-width="0.7"/></svg>
<div style="position:absolute;left:516.5px;top:359.5px;width:221.5px;height:20px;background:linear-gradient(#efefef,#dfdfdf);border-top:1px solid #c8c8c8;border-bottom:1px solid #c0c0c0;box-sizing:border-box;"></div>
<div class="t" style="left:520.10px;top:361.62px;font-size:11.5px;color:#000;transform:scaleX(0.9630);">Navigator</div>
<svg style="left:727.5px;top:367.7px" width="7" height="4" viewBox="0 0 7 4"><path d="M0.3 0.3l3.2 3.2l3.2-3.2" stroke="#444" stroke-width="1" fill="none"/></svg>
<svg style="left:0;top:0" width="740" height="579" viewBox="0 0 740 579"><defs><linearGradient id="bgg" x1="0" y1="1" x2="1" y2="0"><stop offset="0" stop-color="#2a2a2a"/><stop offset="0.55" stop-color="#3c3c3c"/><stop offset="1" stop-color="#666"/></linearGradient><filter id="tex" x="-0.02" y="-0.02" width="1.04" height="1.04" color-interpolation-filters="sRGB"><feTurbulence type="fractalNoise" baseFrequency="0.33" numOctaves="2" seed="11" result="n"/><feColorMatrix in="n" type="matrix" values="1.6 0 0 0 -0.3  1.6 0 0 0 -0.3  1.6 0 0 0 -0.3  0 0 0 0 1" result="g"/><feGaussianBlur in="SourceGraphic" stdDeviation="0.45" result="b"/><feComposite in="b" in2="g" operator="arithmetic" k1="0.55" k2="0.72" k3="0" k4="0" result="m"/><feComposite in="m" in2="b" operator="in"/></filter><filter id="bgn" x="0" y="0" width="1" height="1" color-interpolation-filters="sRGB"><feTurbulence type="fractalNoise" baseFrequency="0.08" numOctaves="2" seed="4" result="n"/><feColorMatrix in="n" type="matrix" values="1 0 0 0 0  1 0 0 0 0  1 0 0 0 0  0 0 0 0 1" result="g"/><feComposite in="SourceGraphic" in2="g" operator="arithmetic" k1="0.6" k2="0.72" k3="0" k4="0"/></filter></defs><rect x="537.4" y="388.6" width="158" height="124.2" fill="url(#bgg)" filter="url(#bgn)"/><g filter="url(#tex)"><circle cx="556.1" cy="411.2" r="9.6" fill="#b4b4b4"/><circle cx="579.1" cy="411.9" r="8.2" fill="#b4b4b4"/><circle cx="601.9" cy="410.1" r="10.0" fill="#b4b4b4"/><circle cx="626.6" cy="410.1" r="10.0" fill="#b4b4b4"/><circle cx="651.4" cy="410.5" r="8.7" fill="#b4b4b4"/><circle cx="676.0" cy="406.7" r="12.5" fill="#b4b4b4"/><circle cx="556.3" cy="440.2" r="8.7" fill="#b4b4b4"/><circle cx="580.1" cy="440.4" r="8.0" fill="#b4b4b4"/><circle cx="601.0" cy="441.5" r="8.2" fill="#b4b4b4"/><circle cx="622.5" cy="440.2" r="8.4" fill="#b4b4b4"/><circle cx="649.4" cy="438.6" r="10.5" fill="#b4b4b4"/><circle cx="676.5" cy="440.4" r="8.4" fill="#b4b4b4"/><circle cx="555.7" cy="470.5" r="7.8" fill="#adadad"/><circle cx="579.6" cy="469.8" r="8.9" fill="#adadad"/><circle cx="601.5" cy="471.0" r="8.2" fill="#adadad"/><circle cx="625.2" cy="468.9" r="9.8" fill="#adadad"/><circle cx="650.7" cy="468.9" r="9.1" fill="#adadad"/><circle cx="680.6" cy="466.4" r="13.0" fill="#adadad"/><circle cx="556.3" cy="496.7" r="11.6" fill="#9a9a9a"/><circle cx="584.6" cy="498.5" r="8.9" fill="#9a9a9a"/><circle cx="608.8" cy="497.2" r="11.9" fill="#9a9a9a"/><circle cx="638.4" cy="498.3" r="10.3" fill="#9a9a9a"/><circle cx="661.7" cy="497.9" r="10.5" fill="#9a9a9a"/><circle cx="684.9" cy="499.7" r="9.1" fill="#9a9a9a"/></g><rect x="537.7" y="388.9" width="157.4" height="123.6" fill="none" stroke="#d63a3a" stroke-width="1"/></svg>
<div style="position:absolute;left:723.2px;top:391.3px;width:10.6px;height:120px;background:#e9e9e9;border:1px solid #dadada;box-sizing:border-box;"></div>
<svg style="left:720px;top:441.8px" width="16" height="10" viewBox="0 0 16 10"><path d="M16 0V10H5L0 5L5 0Z" fill="#0a78d7"/></svg>
<div class="btn" style="left:521.2px;top:523.3px;width:43.5px;height:23px;"></div>
<div class="t" style="left:528.70px;top:525.62px;font-size:11.5px;color:#000;transform:scaleX(0.9704);">Apply</div>
<div class="btn" style="left:574.7px;top:523.3px;width:26.699999999999932px;height:23px;"></div>
<div class="t" style="left:582.40px;top:525.62px;font-size:11.5px;color:#000;transform:scaleX(0.8539);">Fit</div>
<div class="btn" style="left:611.3px;top:523.3px;width:52.30000000000007px;height:23px;"></div>
<div class="t" style="left:619.40px;top:525.62px;font-size:11.5px;color:#000;transform:scaleX(0.9734);">Normal</div>
<div class="t" style="left:694.00px;top:525.62px;font-size:11.5px;color:#111;transform:scaleX(0.8762);">100.00%</div>
<div class="t" style="left:2.80px;top:560.62px;font-size:11.5px;color:#111;transform:scaleX(0.9201);">coins: cost 0.001s</div>
<div style="position:absolute;left:0px;top:578px;width:740px;height:1px;background:#c8c8c8;"></div>
<div style="position:absolute;left:738.5px;top:0px;width:1.5px;height:579px;background:#f4f4f4;"></div>
<div style="position:absolute;left:739px;top:0px;width:1px;height:13px;background:#444;"></div>
</body></html>
